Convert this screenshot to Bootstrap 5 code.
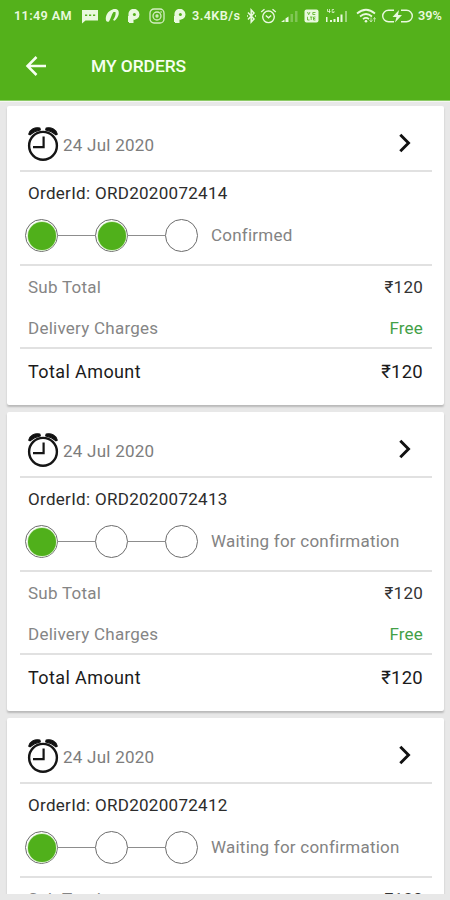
<!DOCTYPE html>
<html lang="en">
<head>
<meta charset="utf-8">
<meta name="viewport" content="width=device-width, initial-scale=1">
<title>My Orders</title>
<link href="https://cdn.jsdelivr.net/npm/bootstrap@5.3.0/dist/css/bootstrap.min.css" rel="stylesheet">
<style>
html, body { height: 900px; overflow: hidden; }
body { font-family: Roboto, "Noto Sans", sans-serif; background: #e8e8e8; color: #222; width: 450px; }
svg { display: block; flex: none; }
.app-head { background: #54b11b; height: 101px; flex: none; color: #f6fff0; border-bottom: 1px solid #8cca66; }
.status { height: 32px; padding-left: 14px; font-size: 12.7px; font-weight: 600; white-space: nowrap; line-height: 32px; color: #e9f9df; }
.status svg { color: #e9f9df; }
.s-time { width: 67px; letter-spacing: .35px; flex: none; }
.s-rate { width: 52px; font-size: 12.7px; letter-spacing: .4px; flex: none; margin-left: 6px; }
.g-2x { margin-left: 2px; }
.g-3x { margin-left: 3px; }
.g-5x { margin-left: 5px; }
.g-6x { margin-left: 6px; }
.g-8x { margin-left: 8px; }
.g-9x { margin-left: 9px; }
.title-bar { height: 68px; padding-left: 25px; }
.page-title { font-size: 17.4px; font-weight: 500; margin: 2px 0 0 44px; line-height: 1; letter-spacing: -.05px; }
.orders { height: 793px; padding: 4px 6px 0 7px; overflow: hidden; border-top: 1px solid #f4f8f1; }
.order { height: 299px; margin-bottom: 7px; border: 0; border-radius: 2px; padding: 0 12px 0 13px; flex: none; box-shadow: 0 2px 2px #b9b9b9; }
.line-b { border-bottom: 2px solid #e1e1e1; }
.o-date { height: 66px; padding: 20px 20px 0 7px; font-size: 17px; letter-spacing: .25px; color: #7d7d7d; }
.o-date span { margin-left: 4px; padding-top: 3px; }
.o-date .go { margin-top: -2px; }
.o-body { height: 94px; padding: 9px 8px 0 8px; }
.o-id { font-size: 17px; line-height: 24px; letter-spacing: .3px; color: #2c2c2c; }
.o-steps { margin: 13.5px 0 0 -3px; height: 34px; }
.dot { width: 33px; height: 33px; border: 1px solid #6c6c6c; border-radius: 50%; flex: none; background: #fff; padding: 1.5px; }
.dot.done::before { content: ""; display: block; width: 100%; height: 100%; border-radius: 50%; background: #50b01b; box-shadow: 0 0 0 .7px #cdeebb; }
.link-line { width: 37px; border-top: 1px solid #8d8d8d; flex: none; }
.o-state { margin-left: 13px; font-size: 17px; letter-spacing: .22px; color: #838383; padding-top: 1px; }
.o-fees { height: 83px; padding: 1px 9px 0 8px; font-size: 17px; letter-spacing: .25px; color: #858585; }
.fee { height: 41.3px; line-height: 41.3px; }
.price { color: #333; letter-spacing: .25px; }
.free { color: #43a047; letter-spacing: .2px; }
.o-total { height: 46px; line-height: 46px; padding: 0 9px 0 8px; font-size: 18px; letter-spacing: .4px; color: #1b1b1b; }
.o-total .sum { letter-spacing: .25px; font-size: 18.5px; }
.foot-gap { height: 6px; background: #e8e8e8; flex: none; }
</style>
<script src="https://cdn.jsdelivr.net/npm/bootstrap@5.3.0/dist/js/bootstrap.bundle.min.js"></script>
</head>
<body class="d-flex flex-column">
<svg width="0" height="0" class="position-absolute">
  <symbol id="clock" viewBox="0 0 32 36">
    <circle cx="16" cy="19.800" r="13.900" fill="#fff" stroke="#151515" stroke-width="2.400"/>
    <path d="M16.600 10.500v10.700H6" fill="none" stroke="#151515" stroke-width="2.200"/>
    <path d="M1.800 8.200C2.800 3.500 7.500 1 12.800 2L13.300 4C8.500 4.800 5.500 6.500 3 8.800ZM30.200 8.200C29.200 3.500 24.500 1 19.200 2L18.700 4C23.500 4.800 26.500 6.500 29 8.800Z" fill="#111" stroke="#111" stroke-width="1.200" stroke-linejoin="round"/>
  </symbol>
  <symbol id="next" viewBox="0 0 14 20"><path d="M2.300 1.800L10.500 10L2.300 18.200" fill="none" stroke="#111" stroke-width="2.900"/></symbol>
  <symbol id="pmark" viewBox="0 0 12 14"><path d="M1 13V6.500M1.500 5.800A4.300 4.300 0 1 1 6.500 9.300H4.500V13H1" fill="none" stroke="currentColor" stroke-width="2"/><path d="M1 13.800V5A5.300 5.300 0 0 1 11.500 5.500A5.300 5.300 0 0 1 5 10.600V13.800Z" fill="currentColor"/><circle cx="6.400" cy="5.600" r="1.500" fill="#54b11b"/></symbol>
</svg>

<header class="app-head">
  <div class="status d-flex align-items-center">
    <span class="s-time">11:49 AM</span>
    <svg width="18" height="16" viewBox="0 0 18 16"><path d="M1 2H17V12.500H4.500L1 15.500Z" fill="currentColor"/><path d="M4 7.200h2.200M8 7.200h2.200M12 7.200h2.200" stroke="#54b11b" stroke-width="1.600"/></svg>
    <svg class="g-6x" width="15" height="16" viewBox="0 0 15 16"><path d="M1 12.500C0 7.500 3 3 7.500 1.500C10 .5 12.500 1 13.500 3C14.500 6 13 10 9.500 12.800L8 12C10 9.500 11 6.500 10.500 4L8.500 4C6.500 6.500 6 10 4 13.500Q2 14.500 1 12.500Z" fill="currentColor"/></svg>
    <svg class="g-8x" width="12" height="14"><use href="#pmark"/></svg>
    <svg class="g-9x" width="16" height="16" viewBox="0 0 16 16" fill="none" stroke="currentColor" stroke-width="1.300" opacity=".85"><rect x="1" y="1" width="14" height="14" rx="4"/><circle cx="8" cy="8" r="4"/><circle cx="8" cy="8" r="1"/><path d="M11.500 4h1.200"/></svg>
    <svg class="g-9x" width="12" height="14"><use href="#pmark"/></svg>
    <span class="s-rate">3.4KB/s</span>
    <svg class="g-2x" width="11" height="16" viewBox="0 0 11 16" fill="none" stroke="currentColor" stroke-width="1.500"><path d="M2 4.500L8 11L5.200 14V2L8 5L2 11.500"/><path d="M1 8h1M9 8h1"/></svg>
    <svg class="g-3x" width="17" height="16" viewBox="0 0 17 16" fill="none" stroke="currentColor" stroke-width="1.400"><circle cx="8.500" cy="8.800" r="5.800"/><path d="M1.200 4L4.500 1.300M15.800 4L12.500 1.300M5.800 7.500L8.500 9.800L11.200 7.500"/></svg>
    <svg class="g-3x" width="18" height="14" viewBox="0 0 18 14"><g fill="currentColor"><path d="M1 13L4.500 10.500V13ZM5.500 9.500L8.500 7.500V13H5.500Z"/><path d="M10.500 5h2.500v8h-2.500ZM15 2h2.500v11H15Z" opacity=".3"/></g></svg>
    <svg class="g-6x" width="15" height="14" viewBox="0 0 15 14"><rect x=".5" y=".5" width="14" height="13" rx="2" fill="currentColor"/><path d="M3.500 3l1.200 2.700L6 3M11.500 3.500H8.800v2h2.500M3.500 7.800V11h2M7.200 11V8M6 8h2.500M11.500 8H9.500v3h2M9.500 9.500h1.700" fill="none" stroke="#54b11b" opacity=".8"/></svg>
    <svg class="g-6x" width="23" height="16" viewBox="0 0 23 16"><g fill="currentColor"><path d="M1 9h1.500v5H1ZM5 12h2v2H5ZM8.500 11h2v3h-2ZM12 9h2v5h-2ZM15.500 6.500h2V14h-2Z"/><path d="M20 3h2v11h-2Z" opacity=".5"/></g><path d="M2.500 1v2.500h3M4.500 1v4M9 1.500H7.200v3H9V3" fill="none" stroke="currentColor" opacity=".75"/></svg>
    <svg class="g-8x" width="20" height="16" viewBox="0 0 20 16"><g fill="none" stroke="currentColor" stroke-width="1.700"><path d="M1 5.500Q10 -2 19 5.500M4 8.500Q10 3.500 16 8.500M7 11.200Q10 8.700 13 11.200"/></g><circle cx="10" cy="13.300" r="1.300" fill="currentColor"/><path d="M15 14V9.500M13.500 12L15 14L16.500 12M18.500 14V9.500M17 11.500L18.500 9.500L20 11.500" stroke="currentColor" fill="none" opacity=".6"/></svg>
    <svg class="g-6x" width="31" height="14" viewBox="0 0 31 14"><path d="M12 1.200H6.500A5.800 5.800 0 0 0 6.500 12.800H12M19 1.200H24.500A5.800 5.800 0 0 1 24.500 12.800H19" fill="none" stroke="currentColor" stroke-width="1.400"/><path d="M17 1L10.500 8H14.500L13 13.500L20 6H16Z" fill="currentColor"/></svg>
    <span class="g-5x">39%</span>
  </div>
  <div class="title-bar d-flex align-items-center">
    <svg width="22" height="22" viewBox="0 0 22 22" fill="none" stroke="currentColor" stroke-width="2.500"><path d="M21 11H3M11.500 2L2.500 11L11.500 20"/></svg>
    <h1 class="page-title">MY ORDERS</h1>
  </div>
</header>

<main class="orders d-flex flex-column">
  <article class="card order">
    <div class="o-date line-b d-flex align-items-start"><svg width="32" height="36"><use href="#clock"/></svg><div class="d-flex flex-fill justify-content-between align-items-center pt-1"><span>24 Jul 2020</span><svg class="go" width="14" height="20"><use href="#next"/></svg></div></div>
    <div class="o-body line-b">
      <div class="o-id">OrderId: ORD2020072414</div>
      <div class="o-steps d-flex align-items-center"><i class="dot done"></i><i class="link-line"></i><i class="dot done"></i><i class="link-line"></i><i class="dot"></i><span class="o-state">Confirmed</span></div>
    </div>
    <div class="o-fees line-b">
      <div class="fee d-flex justify-content-between"><span>Sub Total</span><span class="price">₹120</span></div>
      <div class="fee d-flex justify-content-between"><span>Delivery Charges</span><span class="free">Free</span></div>
    </div>
    <div class="o-total d-flex justify-content-between"><span>Total Amount</span><span class="sum">₹120</span></div>
  </article>

  <article class="card order">
    <div class="o-date line-b d-flex align-items-start"><svg width="32" height="36"><use href="#clock"/></svg><div class="d-flex flex-fill justify-content-between align-items-center pt-1"><span>24 Jul 2020</span><svg class="go" width="14" height="20"><use href="#next"/></svg></div></div>
    <div class="o-body line-b">
      <div class="o-id">OrderId: ORD2020072413</div>
      <div class="o-steps d-flex align-items-center"><i class="dot done"></i><i class="link-line"></i><i class="dot"></i><i class="link-line"></i><i class="dot"></i><span class="o-state">Waiting for confirmation</span></div>
    </div>
    <div class="o-fees line-b">
      <div class="fee d-flex justify-content-between"><span>Sub Total</span><span class="price">₹120</span></div>
      <div class="fee d-flex justify-content-between"><span>Delivery Charges</span><span class="free">Free</span></div>
    </div>
    <div class="o-total d-flex justify-content-between"><span>Total Amount</span><span class="sum">₹120</span></div>
  </article>

  <article class="card order">
    <div class="o-date line-b d-flex align-items-start"><svg width="32" height="36"><use href="#clock"/></svg><div class="d-flex flex-fill justify-content-between align-items-center pt-1"><span>24 Jul 2020</span><svg class="go" width="14" height="20"><use href="#next"/></svg></div></div>
    <div class="o-body line-b">
      <div class="o-id">OrderId: ORD2020072412</div>
      <div class="o-steps d-flex align-items-center"><i class="dot done"></i><i class="link-line"></i><i class="dot"></i><i class="link-line"></i><i class="dot"></i><span class="o-state">Waiting for confirmation</span></div>
    </div>
    <div class="o-fees line-b">
      <div class="fee d-flex justify-content-between"><span>Sub Total</span><span class="price">₹120</span></div>
    </div>
  </article>
</main>
<div class="foot-gap"></div>
</body>
</html>
